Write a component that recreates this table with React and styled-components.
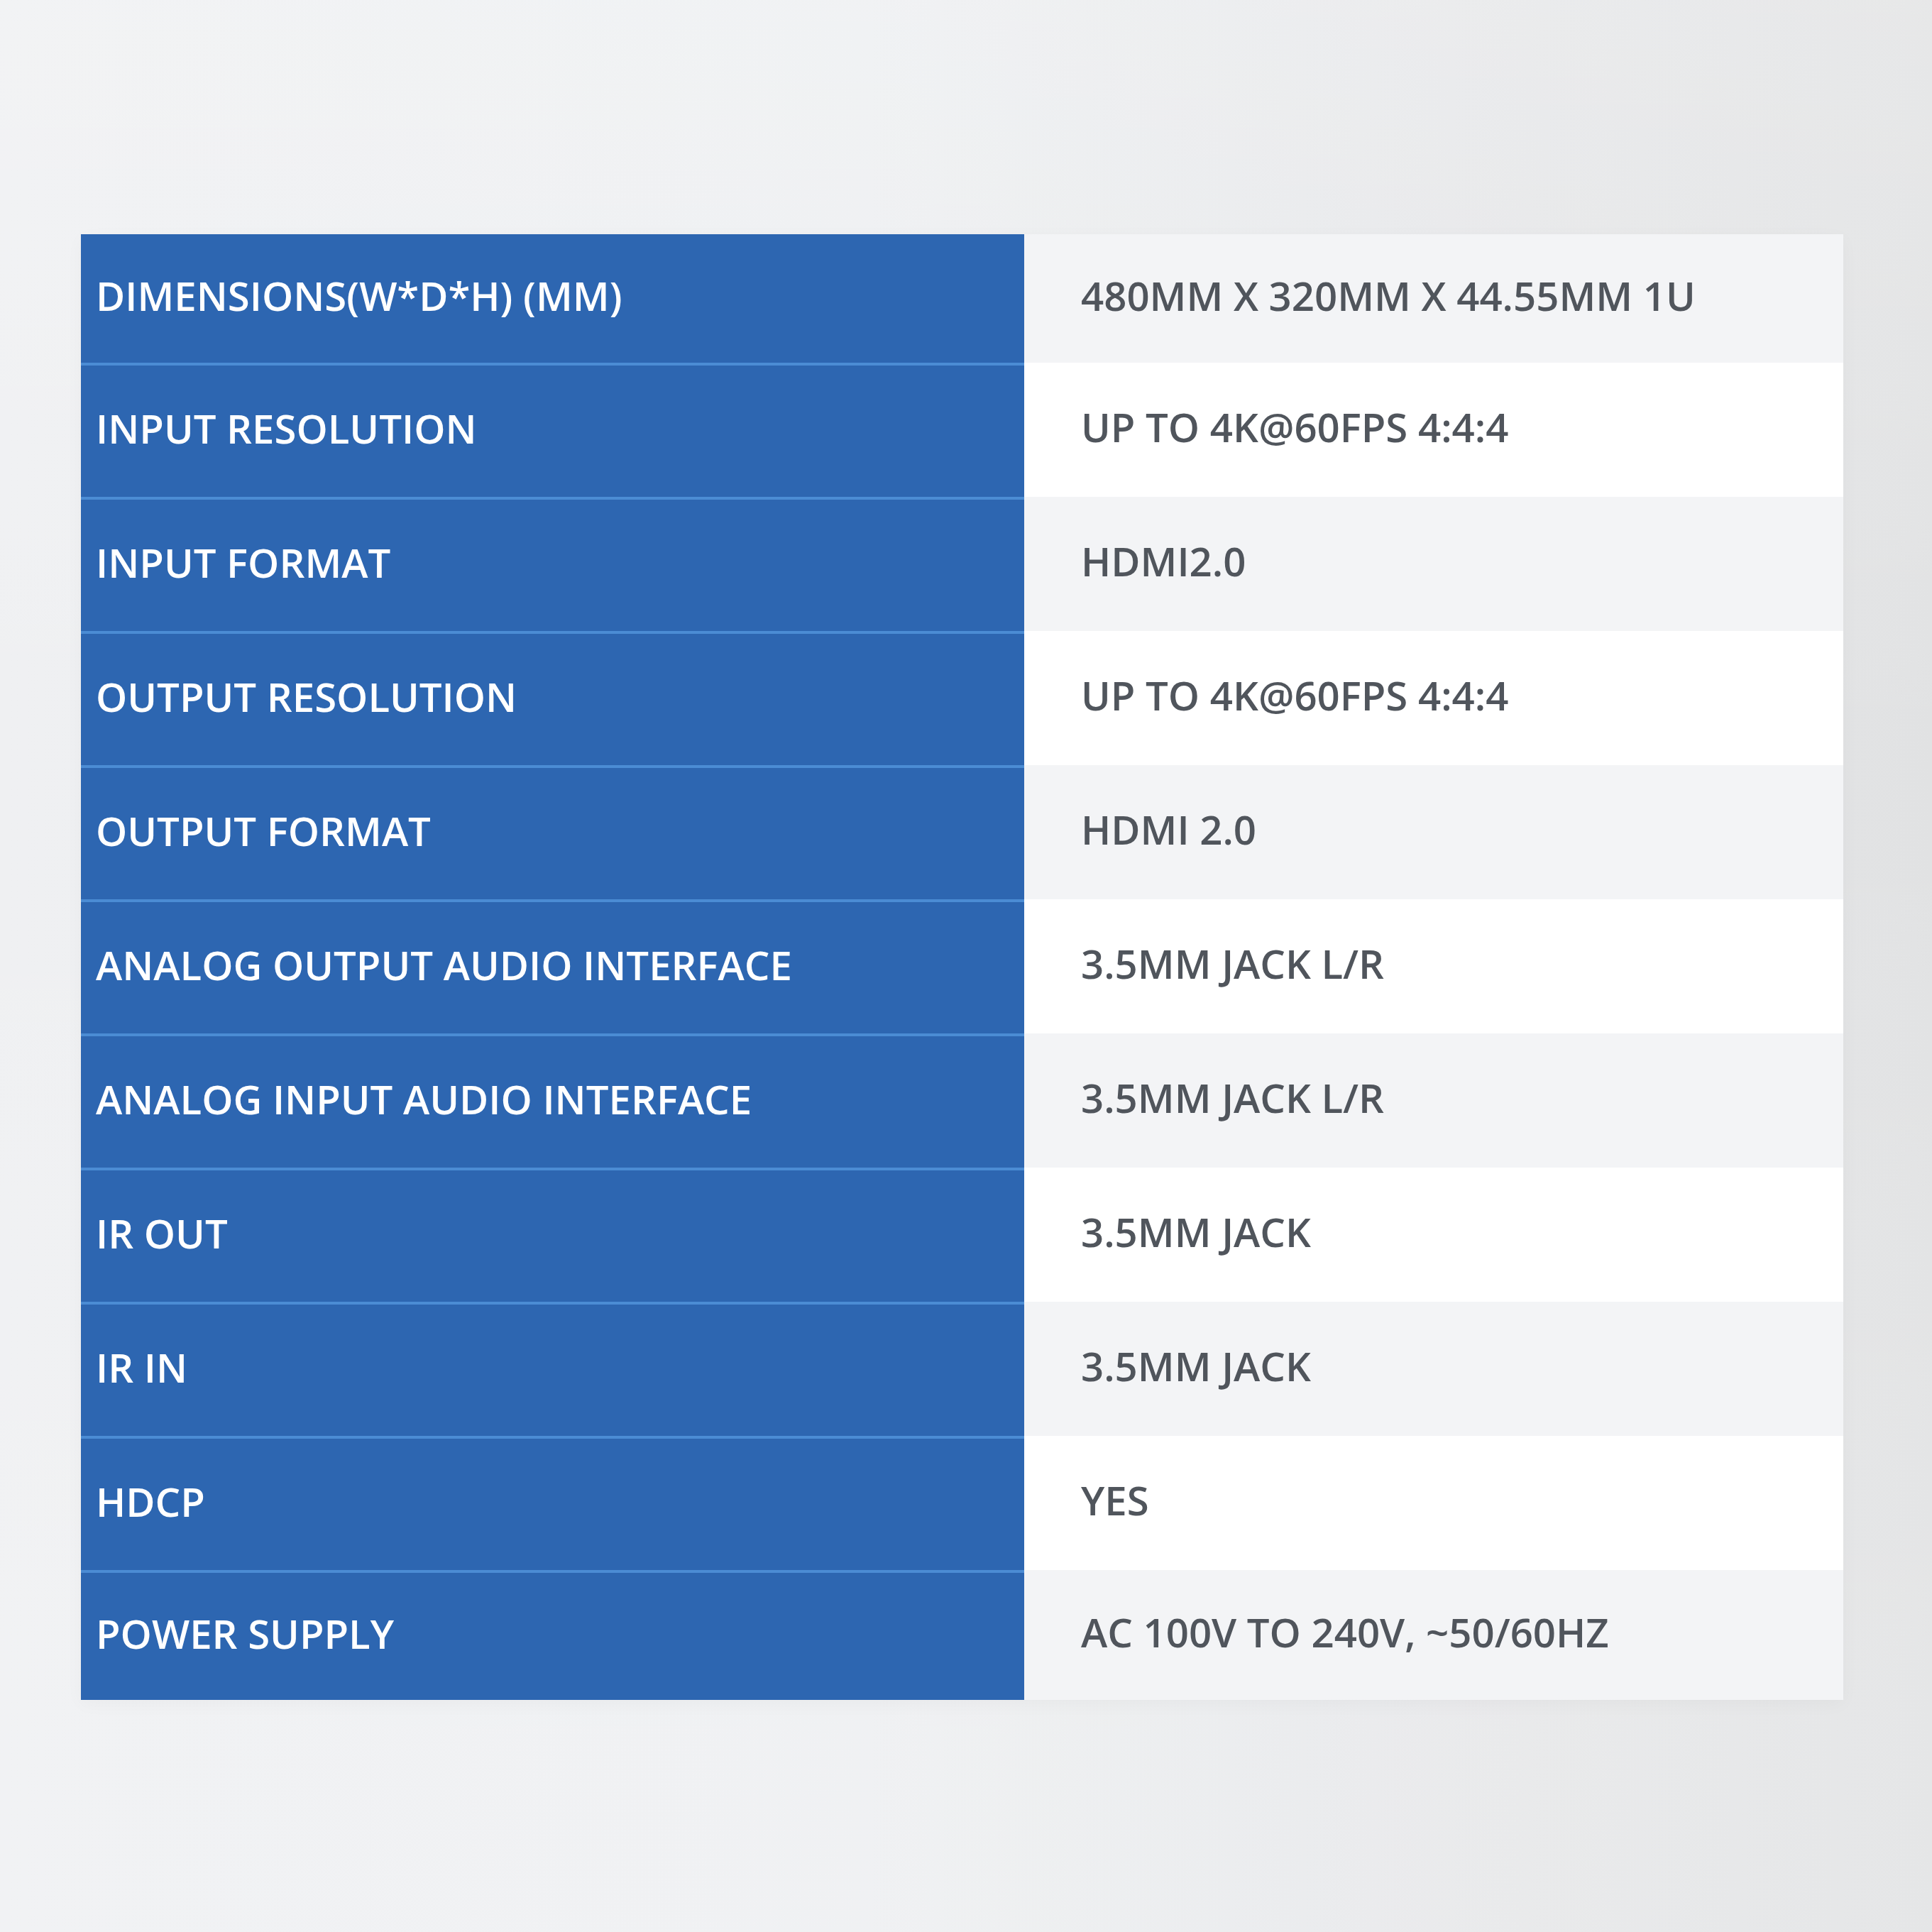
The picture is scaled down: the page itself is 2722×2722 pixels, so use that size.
import React from "react"
import styled, { createGlobalStyle } from "styled-components"

/* --------------------------------- STYLES --------------------------------- */

const GlobalStyle = createGlobalStyle`
	html, body {
		margin: 0;
		padding: 0;
	}
	body {
		font-family: "Open Sans", "Liberation Sans", sans-serif;
	}
`

const Page = styled.div`
	width: 2722px;
	height: 2722px;
	box-sizing: border-box;
	padding: 330px 0 0 114px;
	background:
		linear-gradient(180deg, rgba(255, 255, 255, 0.2) 0%, rgba(255, 255, 255, 0) 40%, rgba(255, 255, 255, 0.15) 90%),
		linear-gradient(90deg, #eff0f2 0%, #edeff1 45%, #e6e7e9 75%, #e1e2e3 100%);
`

const Table = styled.div`
	width: 2483px;
	display: flex;
	flex-direction: column;
	box-shadow: 0 6px 24px rgba(0, 0, 0, 0.03);
`

const Row = styled.div`
	display: grid;
	grid-template-columns: 1329px 1154px;
	height: ${({ $height }) => $height}px;
`

const Label = styled.div`
	display: flex;
	align-items: center;
	box-sizing: border-box;
	padding: 0 0 10px 21px;
	background: #2d66b1;
	border-top: ${({ $first }) => ($first ? "none" : "4px solid #4b8cd4")};
	color: #ffffff;
	font-size: 56.3px;
	font-weight: 600;
	white-space: nowrap;
`

const Value = styled.div`
	display: flex;
	align-items: center;
	box-sizing: border-box;
	padding: 0 0 10px 80px;
	background: ${({ $shade }) => ($shade ? "#f3f4f6" : "#ffffff")};
	color: #50555c;
	font-size: 56.3px;
	font-weight: 600;
	white-space: nowrap;
`

/* ------------------------------- COMPONENTS ------------------------------- */

const SPECS = [
	["DIMENSIONS(W*D*H) (MM)", "480MM X 320MM X 44.55MM 1U"],
	["INPUT RESOLUTION", "UP TO 4K@60FPS 4:4:4"],
	["INPUT FORMAT", "HDMI2.0"],
	["OUTPUT RESOLUTION", "UP TO 4K@60FPS 4:4:4"],
	["OUTPUT FORMAT", "HDMI 2.0"],
	["ANALOG OUTPUT AUDIO INTERFACE", "3.5MM JACK L/R"],
	["ANALOG INPUT AUDIO INTERFACE", "3.5MM JACK L/R"],
	["IR OUT", "3.5MM JACK"],
	["IR IN", "3.5MM JACK"],
	["HDCP", "YES"],
	["POWER SUPPLY", "AC 100V TO 240V, ~50/60HZ"],
]

function SpecRow({ label, value, index, total }) {
	const first = index === 0
	const last = index === total - 1
	const height = first ? 181 : last ? 183 : 189
	return (
		<Row $height={height}>
			<Label $first={first}>{label}</Label>
			<Value $shade={index % 2 === 0}>{value}</Value>
		</Row>
	)
}

export default function App() {
	return (
		<Page>
			<GlobalStyle />
			<Table>
				{SPECS.map(([label, value], i) => (
					<SpecRow key={label} label={label} value={value} index={i} total={SPECS.length} />
				))}
			</Table>
		</Page>
	)
}
